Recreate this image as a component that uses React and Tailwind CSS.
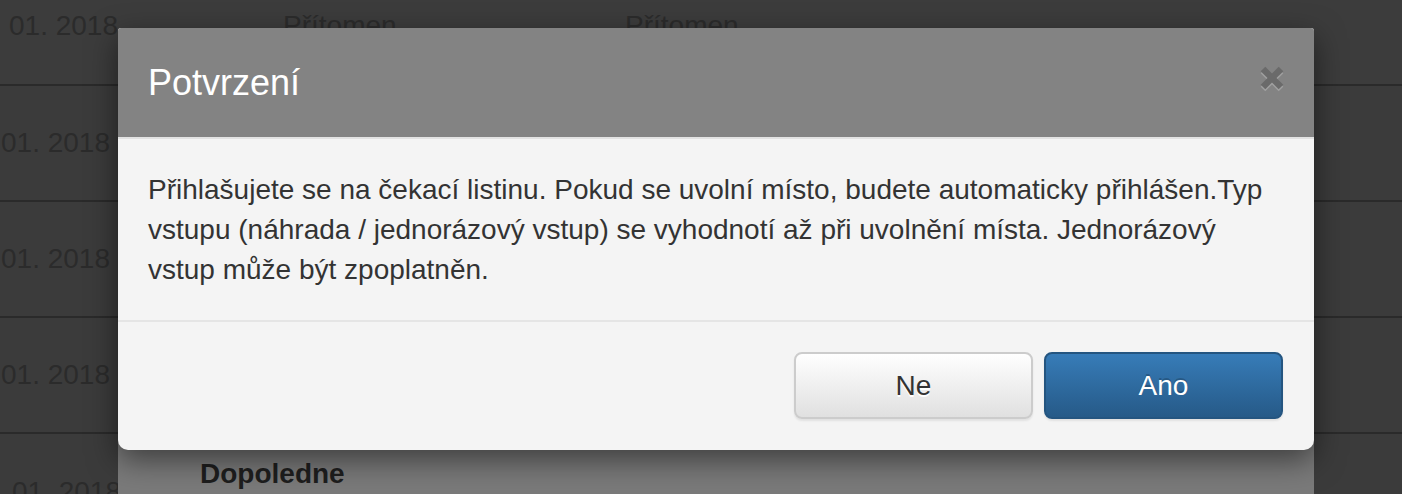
export default function App() {
  const dateCls = "text-[28px] leading-[32px] text-[#2b2b2b] whitespace-nowrap shrink-0";
  const midRows = ["29. 01. 2018", "29. 01. 2018", "29. 01. 2018"];
  return (
    <div className="relative w-[1402px] h-[494px] overflow-hidden bg-[#3b3b3b] font-['Liberation_Sans',Arial,sans-serif]">
      {/* background page (dimmed) */}
      <div className="flex flex-col">
        <div className="flex h-[86px] border-b-2 border-[#2a2a2a] bg-[#3c3c3c] pt-[10px]">
          <div className="w-[118px] shrink-0 flex justify-end overflow-hidden">
            <span className={dateCls}>22. 01. 2018</span>
          </div>
          <div className="w-[165px] shrink-0" />
          <div className="w-[342px] shrink-0">
            <span className={dateCls}>Přítomen</span>
          </div>
          <div>
            <span className={dateCls}>Přítomen</span>
          </div>
        </div>
        {midRows.map((d, i) => (
          <div key={i} className="flex h-[116px] border-b-2 border-[#2a2a2a] items-center">
            <div className="w-[118px] shrink-0 flex justify-end overflow-hidden pr-[8px]">
              <span className={dateCls}>{d}</span>
            </div>
          </div>
        ))}
        <div className="flex h-[116px]">
          <div className="w-[118px] shrink-0 flex items-center overflow-hidden pl-[12px]">
            <span className={dateCls}>01. 2018</span>
          </div>
          <div className="w-[1196px] shrink-0 bg-[#7a7a7a] pl-[82px] pt-[24px]">
            <span className="font-bold text-[28px] leading-[32px] text-[#1e1e1e]">Dopoledne</span>
          </div>
        </div>
      </div>

      {/* modal */}
      <div className="absolute left-[118px] top-[28px] w-[1196px] rounded-t-[3px] rounded-b-[10px] bg-[#f4f4f4] shadow-[0_10px_30px_rgba(0,0,0,0.5)] overflow-hidden">
        <div className="flex justify-between h-[111px] border-b-2 border-[#e2e2e2] bg-[#838383] pl-[30px] pr-[30px]">
          <h4 className="self-center text-[36px] leading-[40px] text-white font-normal">Potvrzení</h4>
          <button className="self-start mt-[38px] w-[24px] h-[24px]" aria-label="Zavřít">
            <svg width="24" height="26" viewBox="0 0 24 26">
              <g transform="translate(0,2)" stroke="#a0a0a0" strokeWidth="6.5" strokeLinecap="butt">
                <line x1="3" y1="3" x2="21" y2="21" />
                <line x1="21" y1="3" x2="3" y2="21" />
              </g>
              <g stroke="#6a6a6a" strokeWidth="6.5" strokeLinecap="butt">
                <line x1="3" y1="3" x2="21" y2="21" />
                <line x1="21" y1="3" x2="3" y2="21" />
              </g>
            </svg>
          </button>
        </div>
        <div className="px-[30px] pt-[31px] pb-[30px] text-[28px] leading-[40px] text-[#333333]">
          Přihlašujete se na čekací listinu. Pokud se uvolní místo, budete automaticky přihlášen.Typ vstupu (náhrada / jednorázový vstup) se vyhodnotí až při uvolnění místa. Jednorázový vstup může být zpoplatněn.
        </div>
        <div className="flex justify-end gap-[11px] border-t-2 border-[#e5e5e5] pt-[30px] pb-[31px] pr-[31px]">
          <button className="h-[67px] w-[239px] rounded-[8px] border-2 border-[#cccccc] bg-linear-to-b from-white to-[#e0e0e0] text-[28px] text-[#333333] [text-shadow:0_2px_0_#ffffff] shadow-[0_2px_2px_rgba(0,0,0,0.075)]">
            Ne
          </button>
          <button className="h-[67px] w-[239px] rounded-[8px] border-2 border-[#245580] bg-linear-to-b from-[#377cb8] to-[#265a88] text-[28px] text-white [text-shadow:0_-2px_0_rgba(0,0,0,0.2)] shadow-[0_2px_2px_rgba(0,0,0,0.075)]">
            Ano
          </button>
        </div>
      </div>
    </div>
  );
}
